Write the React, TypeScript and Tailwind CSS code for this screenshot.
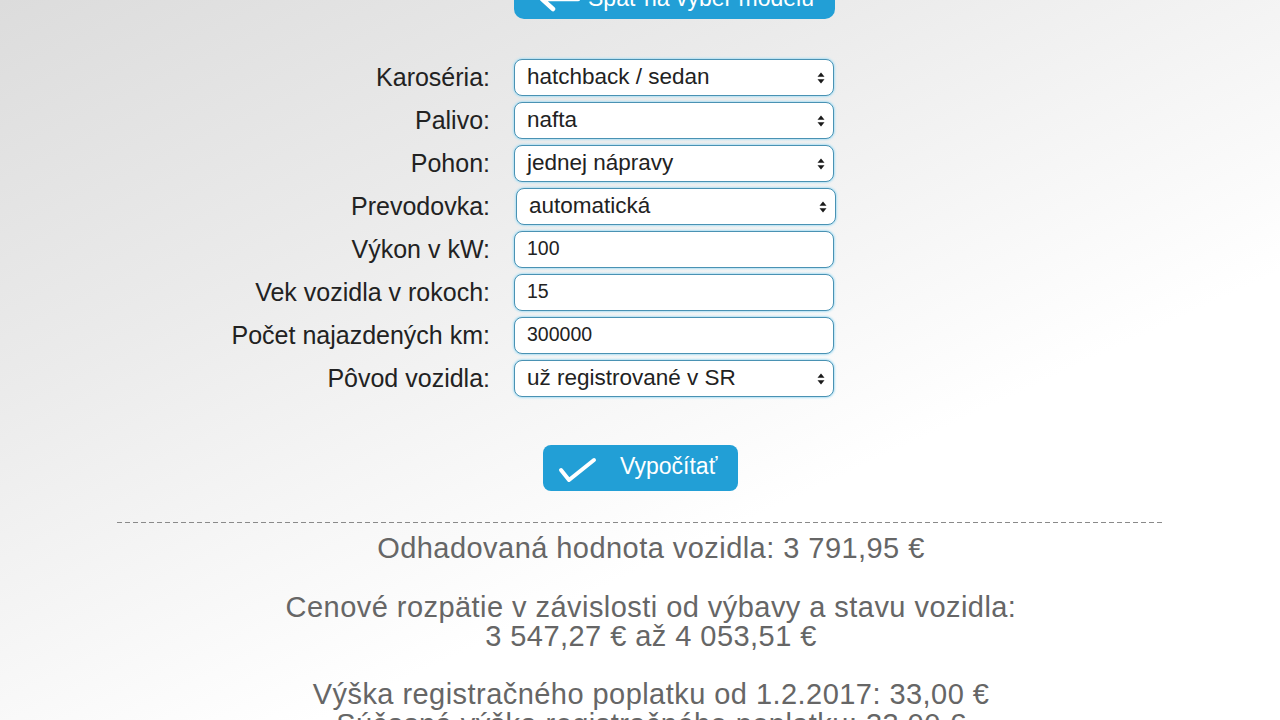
import React from "react";

const font = { fontFamily: '"Liberation Sans", Arial, sans-serif' };

function SelectArrows() {
  return (
    <svg
      className="pointer-events-none absolute right-[9px] top-1/2 -translate-y-1/2"
      width="8"
      height="12"
      viewBox="0 0 8 12"
    >
      <polygon points="4,0.5 7.5,4.8 0.5,4.8" fill="#1a1a1a" />
      <polygon points="0.5,7.2 7.5,7.2 4,11.5" fill="#1a1a1a" />
    </svg>
  );
}

type Row = { label: string; value: string; kind: "select" | "input"; shift?: boolean };

const rows: Row[] = [
  { label: "Karoséria:", value: "hatchback / sedan", kind: "select" },
  { label: "Palivo:", value: "nafta", kind: "select" },
  { label: "Pohon:", value: "jednej nápravy", kind: "select" },
  { label: "Prevodovka:", value: "automatická", kind: "select", shift: true },
  { label: "Výkon v kW:", value: "100", kind: "input" },
  { label: "Vek vozidla v rokoch:", value: "15", kind: "input" },
  { label: "Počet najazdených km:", value: "300000", kind: "input" },
  { label: "Pôvod vozidla:", value: "už registrované v SR", kind: "select" },
];

export default function App() {
  return (
    <div
      className="h-[720px] w-full overflow-hidden bg-[linear-gradient(155deg,#dcdcdc_0%,#ebebeb_30%,#ffffff_66%)] text-[#222]"
      style={font}
    >
      {/* top back button (partially scrolled out) */}
      <div className="flex justify-center">
        <div className="ml-[69px] mt-[-29px] flex h-[48px] w-[321px] items-center rounded-[10px] bg-[#229fd6] pl-[24px] pt-[6px] text-white">
          <svg width="42" height="26" viewBox="0 0 42 26" className="mr-[8px] mt-[2px]">
            <path
              d="M40 13 H5 M15 3 L4 13 L15 23"
              fill="none"
              stroke="#fff"
              strokeWidth="4.5"
              strokeLinecap="round"
              strokeLinejoin="round"
            />
          </svg>
          <span className="text-[23px] leading-none">Späť na výber modelu</span>
        </div>
      </div>

      {/* form */}
      <div className="mt-[40px] flex flex-col gap-[6px]">
        {rows.map((r) => (
          <div key={r.label} className="flex h-[37px] items-center">
            <div className="w-[490px] text-right text-[25px] leading-none text-[#222]">
              {r.label}
            </div>
            <div
              className={
                r.shift
                  ? "relative ml-[26px] h-[37px] w-[320px]"
                  : "relative ml-[24px] h-[37px] w-[320px]"
              }
            >
              {r.kind === "select" ? (
                <div className="flex h-full w-full items-center rounded-[8px] border border-[#4a92b3] bg-white pl-[12px] text-[22.5px] leading-none text-[#222] shadow-[0_0_2px_1px_#b0e0f4]">
                  {r.value}
                  <SelectArrows />
                </div>
              ) : (
                <div className="flex h-full w-full items-center rounded-[8px] border border-[#4a92b3] bg-white pl-[12px] pb-[2px] text-[19.5px] leading-none text-[#222] shadow-[0_0_2px_1px_#b0e0f4]">
                  {r.value}
                </div>
              )}
            </div>
          </div>
        ))}
      </div>

      {/* compute button */}
      <div className="mt-[48px] flex justify-center">
        <div className="ml-[1px] flex h-[46px] w-[195px] items-center rounded-[8px] bg-[#229fd6] pl-[15px] text-white">
          <svg width="40" height="30" viewBox="0 0 40 30" className="mr-[22px] mt-[4px]">
            <path
              d="M3 15 L11 25 L36 5"
              fill="none"
              stroke="#fff"
              strokeWidth="4"
              strokeLinecap="round"
              strokeLinejoin="round"
            />
          </svg>
          <span className="mb-[4px] text-[23px] leading-none">Vypočítať</span>
        </div>
      </div>

      {/* dashed separator */}
      <div className="mx-auto mt-[31px] h-px w-[1048px] translate-x-[1px] bg-[repeating-linear-gradient(to_right,#8a8a8a_0px,#8a8a8a_5px,transparent_5px,transparent_8px)]" />

      {/* results */}
      <div className="mt-[11px] pl-[22px] text-center text-[29px] leading-[29.3px] tracking-[0.45px] text-[#666]">
        <p>Odhadovaná hodnota vozidla: 3 791,95 €</p>
        <p className="mt-[29.3px]">Cenové rozpätie v závislosti od výbavy a stavu vozidla:</p>
        <p>3 547,27 € až 4 053,51 €</p>
        <p className="mt-[29.3px]">Výška registračného poplatku od 1.2.2017: 33,00 €</p>
        <p>Súčasná výška registračného poplatku: 33,00 €</p>
      </div>
    </div>
  );
}
